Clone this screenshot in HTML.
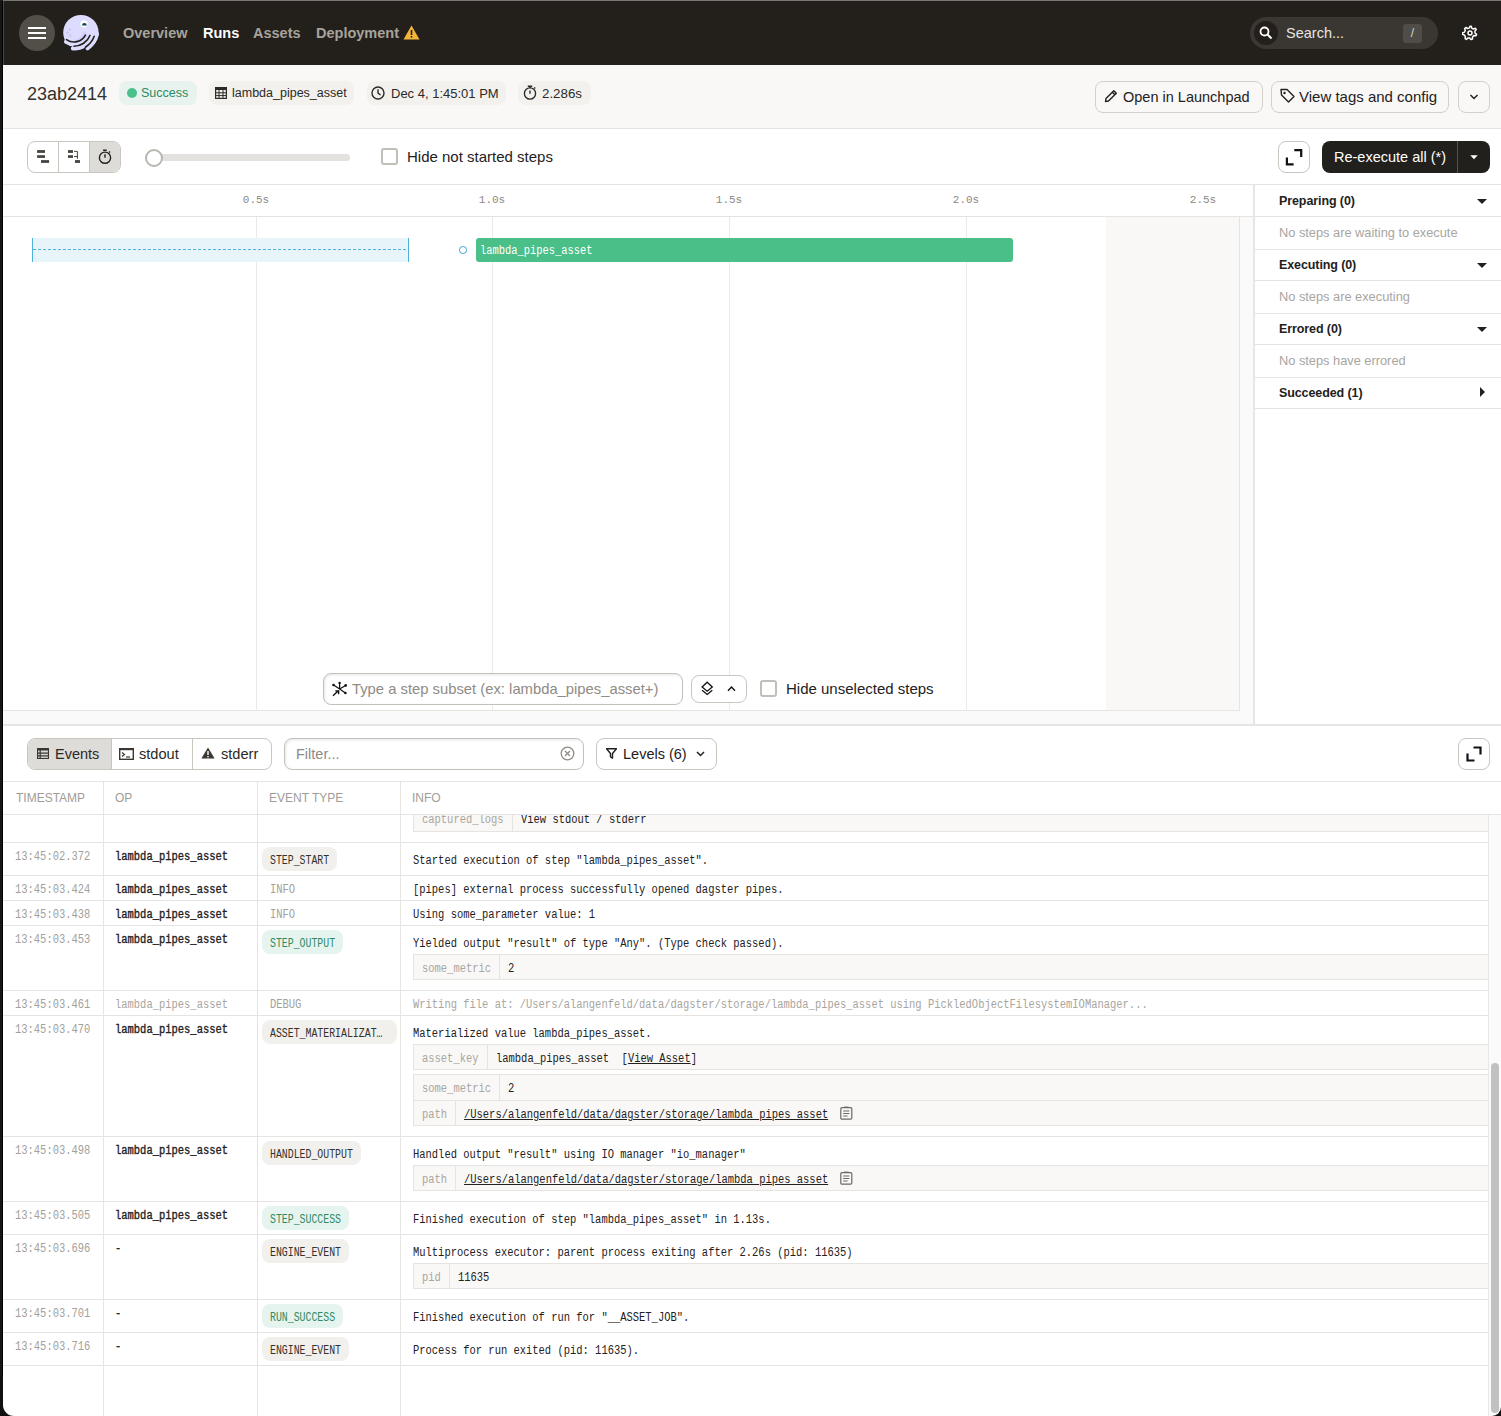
<!DOCTYPE html>
<html><head><meta charset="utf-8">
<style>
*{box-sizing:border-box;margin:0;padding:0}
html,body{width:1501px;height:1416px;overflow:hidden;background:#fff}
body{position:relative;font-family:"Liberation Sans",sans-serif;color:#23211d}
.a{position:absolute}
.mono{font-family:"Liberation Mono",monospace}
.navlink{position:absolute;top:25px;font-size:14.5px;font-weight:bold;color:#a7a39b;line-height:17px}
.tag{position:absolute;top:81px;height:24px;border-radius:8px;background:#f2f1ee;font-size:12.5px;line-height:25px;color:#2d2a26}
.btn{position:absolute;border:1px solid #d3d0ca;border-radius:8px;font-size:14.5px;line-height:30px;color:#23211d}
.hl{position:absolute;height:1px;background:#e6e4e0}
.vl{position:absolute;width:1px;background:#e6e4e0}
.tick{position:absolute;top:193px;width:40px;text-align:center;font-size:11px;line-height:14px;color:#8c8984}
.grid{position:absolute;top:217px;width:1px;height:493px;background:#ebeae8}
.sec{position:absolute;left:1279px;font-size:12.5px;letter-spacing:-0.1px;font-weight:bold;line-height:16px;color:#23211d}
.msg{position:absolute;left:1279px;font-size:12.8px;line-height:16px;color:#a8a5a0}
.car{position:absolute;left:1477px;width:0;height:0;border-left:5px solid transparent;border-right:5px solid transparent;border-top:5px solid #23211d}
.hdrtxt{font-size:12px;line-height:14px;color:#a09d97}
.sx{transform-origin:0 0;transform:scaleX(.868);white-space:nowrap}
.tsx,.opx,.lvl,.inf,.kvk{font-size:12px;line-height:14px;transform-origin:0 0;transform:scaleX(.872);white-space:nowrap}
.tsx{color:#a3a09a}
.opx{color:#23211d;font-weight:normal;-webkit-text-stroke:0.35px #23211d}
.gr{color:#a8a5a0!important;font-weight:normal!important;-webkit-text-stroke:0!important}
.tg{height:24px;border-radius:8px;background:#f1f0ed}
.tgg{background:#e6f4ef}
.tgt{font-size:12px;line-height:24px;color:#34312c;transform-origin:0 0;transform:scaleX(.822);white-space:nowrap}
.tggt{color:#2e8a62}
.lvl{color:#a3a09a}
.inf{color:#23211d}
.kvk{color:#a9a6a0}
.kvt{background:#f9f8f6;border:1px solid #e6e4e0}
</style></head>
<body>
<!-- ============ NAV ============ -->
<div class="a" style="left:0;top:0;width:1501px;height:65px;background:#23201c"></div>
<div class="a" style="left:19px;top:15px;width:36px;height:36px;border-radius:50%;background:#524f48"></div>
<div class="a" style="left:28px;top:27px;width:18px;height:2.4px;background:#fff"></div>
<div class="a" style="left:28px;top:32px;width:18px;height:2.4px;background:#fff"></div>
<div class="a" style="left:28px;top:37px;width:18px;height:2.4px;background:#fff"></div>
<!-- logo -->
<svg class="a" style="left:58px;top:10px" width="48" height="46" viewBox="0 0 48 46">
<circle cx="22.9" cy="22.6" r="17.7" fill="#dddcfe"/>
<path d="M13.82 43.90A25 25 0 0 1 -8.90 16.82" stroke="#22201c" stroke-width="15.6" fill="none"/>
<path d="M28.96 38.96A23.8 23.8 0 0 1 13.93 42.71" stroke="#22201c" stroke-width="4.6" fill="none"/>
<path d="M17 30 Q24 28 25 22.5 Q27 20 28 24 Q26 31 17 31.5Z" fill="#cbc8f8" opacity="0.8"/>
<path d="M30.19 24.16A15.1 15.1 0 0 1 8.00 31.81" stroke="#dddcfe" stroke-width="4.2" stroke-linecap="round" fill="none"/>
<path d="M34.69 24.01A19.35 19.35 0 0 1 14.99 38.32" stroke="#dddcfe" stroke-width="4.3" stroke-linecap="round" fill="none"/>
<path d="M39.08 23.91A23.6 23.6 0 0 1 29.54 38.33" stroke="#dddcfe" stroke-width="3.9" stroke-linecap="round" fill="none"/>
<path d="M27.48 25.10A13 13 0 0 1 8.54 29.65" stroke="#22201c" stroke-width="1.6" stroke-linecap="round" fill="none"/>
<path d="M31.95 25.44A17.2 17.2 0 0 1 16.00 36.20" stroke="#22201c" stroke-width="1.6" stroke-linecap="round" fill="none"/>
<path d="M36.20 26.35A21.5 21.5 0 0 1 27.39 37.23" stroke="#22201c" stroke-width="1.6" stroke-linecap="round" fill="none"/>
<circle cx="26" cy="13.8" r="3.6" fill="#fff"/>
<path d="M24 15.5A2.4 2.4 0 0 1 28.8 15.5Z" fill="#0c4a47"/>
<circle cx="11.7" cy="19.5" r="1.1" fill="#c6c2f6"/><circle cx="9.4" cy="22.7" r="1.1" fill="#c6c2f6"/><circle cx="12.3" cy="25.6" r="1.1" fill="#c6c2f6"/>
</svg>
<div class="navlink" style="left:123px">Overview</div>
<div class="navlink" style="left:203px;color:#fff">Runs</div>
<div class="navlink" style="left:253px">Assets</div>
<div class="navlink" style="left:316px">Deployment</div>
<svg class="a" style="left:403px;top:25px" width="17" height="15" viewBox="0 0 17 15"><path d="M8.5 0.5 L16.5 14.5 L0.5 14.5Z" fill="#f2b53a"/><rect x="7.7" y="5" width="1.6" height="5" fill="#22201c"/><rect x="7.7" y="11" width="1.6" height="1.6" fill="#22201c"/></svg>
<!-- search -->
<div class="a" style="left:1250px;top:17px;width:188px;height:32px;border-radius:16px;background:#3a3733"></div>
<div class="a" style="left:1254px;top:21px;width:24px;height:24px;border-radius:50%;background:#23201c"></div>
<svg class="a" style="left:1259px;top:26px" width="14" height="14" viewBox="0 0 14 14"><circle cx="5.5" cy="5.5" r="4" stroke="#fff" stroke-width="1.8" fill="none"/><path d="M8.5 8.5 L12.5 12.5" stroke="#fff" stroke-width="2"/></svg>
<div class="a" style="left:1286px;top:25px;font-size:14.5px;line-height:17px;color:#e8e6e2">Search...</div>
<div class="a" style="left:1403px;top:24px;width:19px;height:19px;border-radius:3px;background:#504c47;color:#d8d5d0;font-size:12px;line-height:19px;text-align:center">/</div>
<svg class="a" style="left:1462px;top:25px" width="16" height="16" viewBox="0 0 16 16"><path d="M8 1.2 L9.3 1.2 L9.7 3.2 L11.4 4.1 L13.3 3.3 L14.2 4.5 L12.9 6.1 L13 8 L14.6 9.3 L13.8 10.8 L11.9 10.6 L10.5 12 L10.5 14 L8.9 14.6 L7.7 13 L5.8 12.9 L4.5 14.4 L3.1 13.5 L3.4 11.6 L2.3 10 L0.4 9.4 L0.7 7.8 L2.6 7.1 L3.3 5.3 L2.6 3.5 L3.9 2.5 L5.6 3.5 L7.4 2.9Z" fill="none" stroke="#fff" stroke-width="1.5" stroke-linejoin="round"/><circle cx="8" cy="8" r="2" fill="none" stroke="#fff" stroke-width="1.5"/></svg>
<!-- frame top line & left strip -->
<div class="a" style="left:3px;top:0;width:1498px;height:1px;background:#777"></div><div class="a" style="left:3px;top:1px;width:1px;height:64px;background:#4a4844"></div>

<!-- ============ HEADER ============ -->
<div class="a" style="left:0;top:65px;width:1501px;height:63px;background:#f9f8f6"></div>
<div class="hl" style="left:0;top:128px;width:1501px"></div>
<div class="a" style="left:27px;top:84px;font-size:18px;line-height:20px;color:#34312c">23ab2414</div>
<div class="tag" style="left:119px;width:78px;background:#e8f3ef;color:#2e8a62"><span class="a" style="left:8px;top:7px;width:10px;height:10px;border-radius:50%;background:#4bc08a"></span><span class="a" style="left:22px">Success</span></div>
<div class="tag" style="left:209px;width:145px"><span class="a" style="left:23px">lambda_pipes_asset</span></div>
<div class="tag" style="left:367px;width:139px"><span class="a" style="left:24px;font-size:13px">Dec 4, 1:45:01 PM</span></div>
<div class="tag" style="left:518px;width:73px"><span class="a" style="left:24px;font-size:13.3px">2.286s</span></div>

<svg class="a" style="left:215px;top:87px" width="12" height="12" viewBox="0 0 12 12"><rect x="0.6" y="0.6" width="10.8" height="10.8" fill="none" stroke="#2d2a26" stroke-width="1.2"/><rect x="0" y="0" width="12" height="3" fill="#2d2a26"/><path d="M0 5.8H12M0 8.6H12M4 3V12M8 3V12" stroke="#2d2a26" stroke-width="1"/></svg>
<svg class="a" style="left:371px;top:86px" width="14" height="14" viewBox="0 0 14 14"><circle cx="7" cy="7" r="6" fill="none" stroke="#2d2a26" stroke-width="1.4"/><path d="M7 3.2V7.2L9.6 9" fill="none" stroke="#2d2a26" stroke-width="1.4"/></svg>
<svg class="a" style="left:523px;top:85px" width="14" height="15" viewBox="0 0 14 15"><circle cx="7" cy="8.5" r="5.6" fill="none" stroke="#2d2a26" stroke-width="1.4"/><path d="M4.8 1.2H9.2M7 1.2V3M7 5.5V8.8M11.2 3.6L12.3 2.5" fill="none" stroke="#2d2a26" stroke-width="1.4"/></svg>
<div class="btn" style="left:1095px;top:81px;width:168px;height:32px"><span class="a" style="left:27px">Open in Launchpad</span></div>
<div class="btn" style="left:1271px;top:81px;width:178px;height:32px"><span class="a" style="left:27px;font-size:15px">View tags and config</span></div>
<div class="btn" style="left:1458px;top:81px;width:32px;height:32px"></div>


<svg class="a" style="left:1104px;top:89px" width="14" height="14" viewBox="0 0 14 14"><path d="M1.5 12.5L2 9.5L9.8 1.7L12.3 4.2L4.5 12Z M8.3 3.2L10.8 5.7" fill="none" stroke="#23211d" stroke-width="1.4" stroke-linejoin="round"/></svg>
<svg class="a" style="left:1280px;top:88px" width="15" height="15" viewBox="0 0 15 15"><path d="M1 1.5H7L14 8.5L8.5 14L1.5 7Z" fill="none" stroke="#23211d" stroke-width="1.4" stroke-linejoin="round"/><circle cx="4.5" cy="5" r="1.2" fill="#23211d"/></svg>
<svg class="a" style="left:1469px;top:94px" width="10" height="6" viewBox="0 0 10 6"><path d="M1.5 1L5 4.5L8.5 1" fill="none" stroke="#23211d" stroke-width="1.5"/></svg>
<!-- ============ TOOLBAR ============ -->
<div class="hl" style="left:0;top:184px;width:1501px"></div>
<div class="a" style="left:27px;top:141px;width:94px;height:32px;border:1px solid #c9c5bf;border-radius:8px;overflow:hidden">
  <div class="a" style="left:30px;top:0;width:1px;height:30px;background:#c9c5bf"></div>
  <div class="a" style="left:61px;top:0;width:32px;height:30px;background:#dedcd9;border-left:1px solid #c9c5bf"></div>
</div>

<svg class="a" style="left:30px;top:143px" width="90" height="28" viewBox="0 0 90 28">
<g fill="#48453f"><rect x="7.1" y="7.1" width="7.9" height="2.8"/><rect x="7.1" y="12.2" width="7.9" height="2.7"/><rect x="11" y="17.1" width="8.1" height="2.8"/>
<rect x="38" y="7.1" width="5" height="2.8"/><rect x="38" y="12.2" width="5" height="2.7"/><rect x="45" y="17.1" width="5" height="2.8"/></g>
<path d="M44 8.4H47.4V15.9M44 13.5H47.4" fill="none" stroke="#48453f" stroke-width="1"/>
<circle cx="75" cy="14.7" r="5.6" fill="none" stroke="#23211d" stroke-width="1.4"/>
<path d="M73.1 7.3H76.7M75 11.3V14.8M79 9.6L80 8.6" fill="none" stroke="#23211d" stroke-width="1.4"/>
</svg>
<div class="a" style="left:154px;top:154px;width:196px;height:7px;background:#e3e2df;border-radius:3px"></div>
<div class="a" style="left:145px;top:149px;width:18px;height:18px;border-radius:50%;background:#fff;border:2px solid #b9b6b0"></div>
<div class="a" style="left:381px;top:148px;width:17px;height:17px;border-radius:3px;border:2px solid #c2beb8;background:#fff"></div>
<div class="a" style="left:407px;top:148px;font-size:15px;line-height:18px">Hide not started steps</div>
<div class="a" style="left:1278px;top:141px;width:32px;height:32px;border:1px solid #c9c5bf;border-radius:8px"></div>
<div class="a" style="left:1322px;top:141px;width:168px;height:32px;background:#22201c;border-radius:8px;color:#fff;font-size:14.5px;line-height:32px">
  <span class="a" style="left:12px">Re-execute all (*)</span>
  <div class="a" style="left:135px;top:0;width:1px;height:32px;background:#55524c"></div>
</div>


<svg class="a" style="left:1278px;top:141px" width="32" height="32" viewBox="0 0 32 32"><path d="M16.3 9.2H23.2V15.9M8.9 16.6V23.3H15.6" fill="none" stroke="#111" stroke-width="2.2"/></svg>
<svg class="a" style="left:1470px;top:155px" width="8" height="5" viewBox="0 0 8 5"><path d="M0.3 0.3H7.7L4 4.3Z" fill="#fff"/></svg>
<!-- ============ TIMELINE ============ -->
<div class="a" style="left:3px;top:217px;width:1251px;height:508px;background:#fafafa"></div>
<div class="a" style="left:3px;top:217px;width:1237px;height:493px;background:#fff"></div>
<div class="a" style="left:1106px;top:217px;width:134px;height:493px;background:#f9f8f6"></div>
<div class="vl" style="left:1239px;top:217px;height:494px"></div>
<div class="hl" style="left:3px;top:710px;width:1237px"></div>
<div class="hl" style="left:0;top:216px;width:1254px"></div>
<div class="grid" style="left:256px"></div>
<div class="grid" style="left:492px"></div>
<div class="grid" style="left:729px"></div>
<div class="grid" style="left:966px"></div>
<div class="tick mono" style="left:236px">0.5s</div>
<div class="tick mono" style="left:472px">1.0s</div>
<div class="tick mono" style="left:709px">1.5s</div>
<div class="tick mono" style="left:946px">2.0s</div>
<div class="tick mono" style="left:1183px">2.5s</div>
<!-- blue waiting bar -->
<div class="a" style="left:32px;top:238px;width:377px;height:24px;background:#e7f5fa"></div>
<div class="a" style="left:32px;top:238px;width:1px;height:24px;background:#4fb3d9"></div>
<div class="a" style="left:408px;top:238px;width:1px;height:24px;background:#4fb3d9"></div>
<div class="a" style="left:33px;top:249px;width:375px;height:1px;background:repeating-linear-gradient(90deg,#4fb3d9 0 3px,transparent 3px 5px)"></div>
<div class="a" style="left:459px;top:246px;width:7.5px;height:7.5px;border-radius:50%;border:1.6px solid #3aa5d8;background:#fff"></div>
<div class="a" style="left:476px;top:238px;width:537px;height:24px;background:#4bbf88;border-radius:3px"></div><div class="a mono sx" style="left:480px;top:244px;color:#fff;font-size:12px;line-height:14px">lambda_pipes_asset</div>
<!-- subset controls -->
<div class="a" style="left:323px;top:673px;width:360px;height:32px;border:1px solid #c4c0ba;border-radius:8px;background:#fff;box-shadow:inset 1px 1px 3px rgba(0,0,0,0.10)"></div>
<div class="a" style="left:352px;top:681px;font-size:14.8px;line-height:17px;color:#8f8b85">Type a step subset (ex: lambda_pipes_asset+)</div>
<div class="a" style="left:691px;top:675px;width:56px;height:28px;border:1px solid #c9c5bf;border-radius:8px;background:#fff"></div>
<svg class="a" style="left:700px;top:681px" width="15" height="15" viewBox="0 0 15 15"><path d="M7.2 1.2L12.3 6L7.2 10.2L2.1 6Z" fill="none" stroke="#111" stroke-width="1.3" stroke-linejoin="miter"/><path d="M2.1 9.2L7.2 13.4L12.3 9.2" fill="none" stroke="#111" stroke-width="1.3"/></svg>
<svg class="a" style="left:727px;top:685px" width="9" height="7" viewBox="0 0 9 7"><path d="M1 5.8L4.5 2L8 5.8" fill="none" stroke="#111" stroke-width="1.4"/></svg>
<svg class="a" style="left:331px;top:680px" width="17" height="17" viewBox="0 0 17 17"><g stroke="#111" stroke-width="1.2" fill="none"><path d="M8.6 9L2.6 5.1M8.6 9V3M8.6 9L14.6 5.4M8.6 9L14.4 13"/><path d="M2 15.8L7.6 10.6M4.3 10.9H7.6V14.2" stroke-width="1.4"/></g><g fill="#111"><circle cx="2.5" cy="5" r="1.3"/><circle cx="8.6" cy="2.9" r="1.2"/><circle cx="14.7" cy="5.4" r="1.3"/><circle cx="14.4" cy="13" r="1.3"/></g></svg>
<div class="a" style="left:760px;top:680px;width:17px;height:17px;border-radius:3px;border:2px solid #c2beb8;background:#fff"></div>
<div class="a" style="left:786px;top:680px;font-size:15px;line-height:18px">Hide unselected steps</div>

<!-- right panel -->
<div class="a" style="left:1253px;top:185px;width:2px;height:541px;background:#e6e6e6"></div>
<div class="hl" style="left:1255px;top:216px;width:246px"></div>
<div class="hl" style="left:1255px;top:249px;width:246px"></div>
<div class="hl" style="left:1255px;top:280px;width:246px"></div>
<div class="hl" style="left:1255px;top:313px;width:246px"></div>
<div class="hl" style="left:1255px;top:344px;width:246px"></div>
<div class="hl" style="left:1255px;top:377px;width:246px"></div>
<div class="hl" style="left:1255px;top:408px;width:246px"></div>
<div class="sec" style="top:193px">Preparing (0)</div>
<div class="msg" style="top:225px">No steps are waiting to execute</div>
<div class="sec" style="top:257px">Executing (0)</div>
<div class="msg" style="top:289px">No steps are executing</div>
<div class="sec" style="top:321px">Errored (0)</div>
<div class="msg" style="top:353px">No steps have errored</div>
<div class="sec" style="top:385px">Succeeded (1)</div>
<div class="car" style="top:199px"></div>
<div class="car" style="top:263px"></div>
<div class="car" style="top:327px"></div>
<div class="a" style="left:1480px;top:387px;width:0;height:0;border-top:5px solid transparent;border-bottom:5px solid transparent;border-left:5px solid #23211d"></div>
<div class="a" style="left:0;top:724px;width:1501px;height:2px;background:#e6e6e6"></div>

<!--LOGS-->

<div class="a" style="left:27px;top:738px;width:245px;height:32px;border:1px solid #c9c5bf;border-radius:8px;overflow:hidden">
  <div class="a" style="left:0;top:0;width:84px;height:30px;background:#dedcd9;border-right:1px solid #c9c5bf"></div>
  <div class="a" style="left:164px;top:0;width:1px;height:30px;background:#c9c5bf"></div>
</div>
<svg class="a" style="left:37px;top:748px" width="12" height="11" viewBox="0 0 12 11"><rect x="0.5" y="0.5" width="11" height="10" fill="none" stroke="#3a3733" stroke-width="1.2"/><rect x="0" y="0" width="12" height="2.5" fill="#3a3733"/><path d="M0 5.2H12M0 7.8H12M3.2 0V11" stroke="#3a3733" stroke-width="1.2"/></svg>
<div class="a" style="left:55px;top:746px;font-size:14.5px;line-height:16px;color:#2b2925">Events</div>
<svg class="a" style="left:119px;top:748px" width="15" height="12" viewBox="0 0 15 12"><rect x="0.7" y="0.7" width="13.6" height="10.6" fill="none" stroke="#3a3733" stroke-width="1.4"/><rect x="0" y="0" width="15" height="2.2" fill="#3a3733"/><path d="M3 4.5L5.5 6.5L3 8.5" fill="none" stroke="#3a3733" stroke-width="1.2"/><path d="M7 9H11" stroke="#3a3733" stroke-width="1.2"/></svg>
<div class="a" style="left:139px;top:746px;font-size:14.6px;line-height:16px;color:#2b2925">stdout</div>
<svg class="a" style="left:201px;top:747px" width="14" height="12" viewBox="0 0 14 12"><path d="M7 0.5L13.6 11.5H0.4Z" fill="#3a3733"/><rect x="6.3" y="4" width="1.4" height="4" fill="#fff"/><rect x="6.3" y="9" width="1.4" height="1.4" fill="#fff"/></svg>
<div class="a" style="left:221px;top:746px;font-size:14.6px;line-height:16px;color:#2b2925">stderr</div>
<div class="a" style="left:284px;top:738px;width:300px;height:32px;border:1px solid #c4c0ba;border-radius:8px;background:#fff;box-shadow:inset 1px 1px 3px rgba(0,0,0,0.10)"></div>
<div class="a" style="left:296px;top:746px;font-size:14.5px;line-height:16px;color:#8f8b85">Filter...</div>
<svg class="a" style="left:560px;top:746px" width="15" height="15" viewBox="0 0 15 15"><circle cx="7.5" cy="7.5" r="6.3" fill="none" stroke="#8f8b85" stroke-width="1.3"/><path d="M5 5L10 10M10 5L5 10" stroke="#8f8b85" stroke-width="1.3"/></svg>
<div class="a" style="left:596px;top:738px;width:121px;height:32px;border:1px solid #c9c5bf;border-radius:8px;background:#fff"></div>
<svg class="a" style="left:606px;top:748px" width="11" height="11" viewBox="0 0 11 11"><path d="M0.5 0.8H10.5L6.5 5.5V10.2L4.5 9V5.5Z" fill="none" stroke="#23211d" stroke-width="1.4" stroke-linejoin="round"/></svg>
<div class="a" style="left:623px;top:746px;font-size:14.5px;line-height:16px;color:#23211d">Levels (6)</div>
<svg class="a" style="left:696px;top:751px" width="9" height="6" viewBox="0 0 9 6"><path d="M1 1L4.5 4.5L8 1" fill="none" stroke="#23211d" stroke-width="1.5"/></svg>
<div class="a" style="left:1458px;top:738px;width:32px;height:32px;border:1px solid #c9c5bf;border-radius:8px;background:#fff"></div>
<svg class="a" style="left:1466px;top:746px" width="16" height="16" viewBox="0 0 16 16"><path d="M1.5 7.5V14.5H8.5" fill="none" stroke="#111" stroke-width="2.2"/><path d="M7.5 1.5H14.5V8.5" fill="none" stroke="#111" stroke-width="2.2"/></svg>

<div class="hl" style="left:3px;top:781px;width:1498px"></div>
<div class="hl" style="left:3px;top:814px;width:1498px"></div>
<div class="vl" style="left:103px;top:782px;height:634px"></div>
<div class="vl" style="left:257px;top:782px;height:634px"></div>
<div class="vl" style="left:400px;top:782px;height:634px"></div>
<div class="a hdrtxt" style="left:16px;top:791px">TIMESTAMP</div>
<div class="a hdrtxt" style="left:115px;top:791px">OP</div>
<div class="a hdrtxt" style="left:269px;top:791px">EVENT TYPE</div>
<div class="a hdrtxt" style="left:412px;top:791px">INFO</div>
<div class="a kvt" style="left:413px;top:806px;width:1077px;height:26px"></div>
<div class="vl" style="left:512px;top:806px;height:25px"></div>
<div class="a mono kvk" style="left:422px;top:813px;">captured_logs</div>
<div class="a mono inf" style="left:521px;top:813px;">View stdout / stderr</div>
<div class="a" style="left:3px;top:782px;width:1498px;height:32px;background:#fff"></div>
<div class="vl" style="left:103px;top:782px;height:32px"></div>
<div class="vl" style="left:257px;top:782px;height:32px"></div>
<div class="vl" style="left:400px;top:782px;height:32px"></div>
<div class="a hdrtxt" style="left:16px;top:791px">TIMESTAMP</div>
<div class="a hdrtxt" style="left:115px;top:791px">OP</div>
<div class="a hdrtxt" style="left:269px;top:791px">EVENT TYPE</div>
<div class="a hdrtxt" style="left:412px;top:791px">INFO</div>
<div class="hl" style="left:3px;top:814px;width:1498px"></div>
<div class="hl" style="left:3px;top:842px;width:1485px"></div>
<div class="a mono tsx" style="left:15px;top:850px;">13:45:02.372</div>
<div class="a mono opx" style="left:115px;top:850px;">lambda_pipes_asset</div>
<div class="a tg" style="left:262px;top:847px;width:75px"></div>
<div class="a mono tgt" style="left:270px;top:849px">STEP_START</div>
<div class="a mono inf" style="left:413px;top:854px;">Started execution of step "lambda_pipes_asset".</div>
<div class="hl" style="left:3px;top:875px;width:1485px"></div>
<div class="a mono tsx" style="left:15px;top:883px;">13:45:03.424</div>
<div class="a mono opx" style="left:115px;top:883px;">lambda_pipes_asset</div>
<div class="a mono lvl" style="left:270px;top:883px;">INFO</div>
<div class="a mono inf" style="left:413px;top:883px;">[pipes] external process successfully opened dagster pipes.</div>
<div class="hl" style="left:3px;top:900px;width:1485px"></div>
<div class="a mono tsx" style="left:15px;top:908px;">13:45:03.438</div>
<div class="a mono opx" style="left:115px;top:908px;">lambda_pipes_asset</div>
<div class="a mono lvl" style="left:270px;top:908px;">INFO</div>
<div class="a mono inf" style="left:413px;top:908px;">Using some_parameter value: 1</div>
<div class="hl" style="left:3px;top:925px;width:1485px"></div>
<div class="a mono tsx" style="left:15px;top:933px;">13:45:03.453</div>
<div class="a mono opx" style="left:115px;top:933px;">lambda_pipes_asset</div>
<div class="a tg tgg" style="left:262px;top:930px;width:81px"></div>
<div class="a mono tgt tggt" style="left:270px;top:932px">STEP_OUTPUT</div>
<div class="a mono inf" style="left:413px;top:937px;">Yielded output "result" of type "Any". (Type check passed).</div>
<div class="a kvt" style="left:413px;top:954px;width:1077px;height:26px"></div>
<div class="vl" style="left:499px;top:955px;height:24px"></div>
<div class="a mono kvk" style="left:422px;top:962px;">some_metric</div>
<div class="a mono inf" style="left:508px;top:962px;">2</div>
<div class="hl" style="left:3px;top:990px;width:1485px"></div>
<div class="a mono tsx" style="left:15px;top:998px;">13:45:03.461</div>
<div class="a mono opx gr" style="left:115px;top:998px;">lambda_pipes_asset</div>
<div class="a mono lvl" style="left:270px;top:998px;">DEBUG</div>
<div class="a mono inf gr" style="left:413px;top:998px;">Writing file at: /Users/alangenfeld/data/dagster/storage/lambda_pipes_asset using PickledObjectFilesystemIOManager...</div>
<div class="hl" style="left:3px;top:1015px;width:1485px"></div>
<div class="a mono tsx" style="left:15px;top:1023px;">13:45:03.470</div>
<div class="a mono opx" style="left:115px;top:1023px;">lambda_pipes_asset</div>
<div class="a tg" style="left:262px;top:1020px;width:135px"></div>
<div class="a mono tgt" style="left:270px;top:1022px">ASSET_MATERIALIZAT…</div>
<div class="a mono inf" style="left:413px;top:1027px;">Materialized value lambda_pipes_asset.</div>
<div class="a kvt" style="left:413px;top:1044px;width:1077px;height:26px"></div>
<div class="vl" style="left:487px;top:1045px;height:24px"></div>
<div class="a mono kvk" style="left:422px;top:1052px;">asset_key</div>
<div class="a mono inf" style="left:496px;top:1052px;">lambda_pipes_asset&nbsp;&nbsp;[<u>View Asset</u>]</div>
<div class="a kvt" style="left:413px;top:1074px;width:1077px;height:52px"></div>
<div class="vl" style="left:499px;top:1075px;height:25px"></div>
<div class="a mono kvk" style="left:422px;top:1082px;">some_metric</div>
<div class="a mono inf" style="left:508px;top:1082px;">2</div>
<div class="hl" style="left:414px;top:1100px;width:1076px"></div>
<div class="vl" style="left:455px;top:1101px;height:24px"></div>
<div class="a mono kvk" style="left:422px;top:1108px;">path</div>
<div class="a mono inf" style="left:464px;top:1108px;"><u>/Users/alangenfeld/data/dagster/storage/lambda_pipes_asset</u></div>
<div class="a" style="left:840px;top:1106px;height:14px"><svg width="13" height="14" viewBox="0 0 13 14"><rect x="0.8" y="1.6" width="11" height="11.6" rx="1.2" fill="none" stroke="#6b6862" stroke-width="1.2"/><path d="M4 1.6H8.6V0.6H4Z" fill="#6b6862"/><path d="M3.2 5H9.4M3.2 7.5H9.4M3.2 10H7.6" stroke="#6b6862" stroke-width="1"/></svg></div>
<div class="hl" style="left:3px;top:1136px;width:1485px"></div>
<div class="a mono tsx" style="left:15px;top:1144px;">13:45:03.498</div>
<div class="a mono opx" style="left:115px;top:1144px;">lambda_pipes_asset</div>
<div class="a tg" style="left:262px;top:1141px;width:99px"></div>
<div class="a mono tgt" style="left:270px;top:1143px">HANDLED_OUTPUT</div>
<div class="a mono inf" style="left:413px;top:1148px;">Handled output "result" using IO manager "io_manager"</div>
<div class="a kvt" style="left:413px;top:1165px;width:1077px;height:26px"></div>
<div class="vl" style="left:455px;top:1166px;height:24px"></div>
<div class="a mono kvk" style="left:422px;top:1173px;">path</div>
<div class="a mono inf" style="left:464px;top:1173px;"><u>/Users/alangenfeld/data/dagster/storage/lambda_pipes_asset</u></div>
<div class="a" style="left:840px;top:1171px;height:14px"><svg width="13" height="14" viewBox="0 0 13 14"><rect x="0.8" y="1.6" width="11" height="11.6" rx="1.2" fill="none" stroke="#6b6862" stroke-width="1.2"/><path d="M4 1.6H8.6V0.6H4Z" fill="#6b6862"/><path d="M3.2 5H9.4M3.2 7.5H9.4M3.2 10H7.6" stroke="#6b6862" stroke-width="1"/></svg></div>
<div class="hl" style="left:3px;top:1201px;width:1485px"></div>
<div class="a mono tsx" style="left:15px;top:1209px;">13:45:03.505</div>
<div class="a mono opx" style="left:115px;top:1209px;">lambda_pipes_asset</div>
<div class="a tg tgg" style="left:262px;top:1206px;width:87px"></div>
<div class="a mono tgt tggt" style="left:270px;top:1208px">STEP_SUCCESS</div>
<div class="a mono inf" style="left:413px;top:1213px;">Finished execution of step "lambda_pipes_asset" in 1.13s.</div>
<div class="hl" style="left:3px;top:1234px;width:1485px"></div>
<div class="a mono tsx" style="left:15px;top:1242px;">13:45:03.696</div>
<div class="a mono opx" style="left:115px;top:1242px;">-</div>
<div class="a tg" style="left:262px;top:1239px;width:87px"></div>
<div class="a mono tgt" style="left:270px;top:1241px">ENGINE_EVENT</div>
<div class="a mono inf" style="left:413px;top:1246px;">Multiprocess executor: parent process exiting after 2.26s (pid: 11635)</div>
<div class="a kvt" style="left:413px;top:1263px;width:1077px;height:26px"></div>
<div class="vl" style="left:449px;top:1264px;height:24px"></div>
<div class="a mono kvk" style="left:422px;top:1271px;">pid</div>
<div class="a mono inf" style="left:458px;top:1271px;">11635</div>
<div class="hl" style="left:3px;top:1299px;width:1485px"></div>
<div class="a mono tsx" style="left:15px;top:1307px;">13:45:03.701</div>
<div class="a mono opx" style="left:115px;top:1307px;">-</div>
<div class="a tg tgg" style="left:262px;top:1304px;width:81px"></div>
<div class="a mono tgt tggt" style="left:270px;top:1306px">RUN_SUCCESS</div>
<div class="a mono inf" style="left:413px;top:1311px;">Finished execution of run for "__ASSET_JOB".</div>
<div class="hl" style="left:3px;top:1332px;width:1485px"></div>
<div class="a mono tsx" style="left:15px;top:1340px;">13:45:03.716</div>
<div class="a mono opx" style="left:115px;top:1340px;">-</div>
<div class="a tg" style="left:262px;top:1337px;width:87px"></div>
<div class="a mono tgt" style="left:270px;top:1339px">ENGINE_EVENT</div>
<div class="a mono inf" style="left:413px;top:1344px;">Process for run exited (pid: 11635).</div>
<div class="hl" style="left:3px;top:1365px;width:1485px"></div>
<div class="a" style="left:1488px;top:815px;width:13px;height:601px;background:#fafafa;border-left:1px solid #e8e8e8"></div>
<div class="a" style="left:1491px;top:1063px;width:8px;height:350px;background:#c1c1c1;border-radius:4px"></div>
<!--/LOGS-->

<!-- left strip -->
<div class="a" style="left:0;top:1px;width:3px;height:1415px;background:#161616"></div>
<div class="a" style="left:2px;top:1px;width:1px;height:1415px;background:#000"></div>
<div class="a" style="left:0;top:1376px;width:40px;height:40px;overflow:hidden"><div class="a" style="left:3px;top:-30px;width:80px;height:70px;border-bottom-left-radius:11px;box-shadow:0 0 0 40px #111"></div></div>
<div class="a" style="left:1461px;top:1376px;width:40px;height:40px;overflow:hidden"><div class="a" style="left:-40px;top:-30px;width:80px;height:70px;border-bottom-right-radius:9px;box-shadow:0 0 0 40px #111"></div></div>
</body></html>
